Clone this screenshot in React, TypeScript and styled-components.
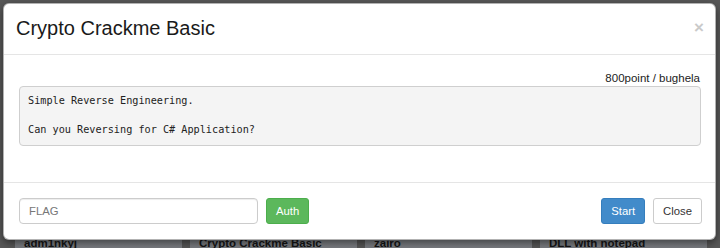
import React from 'react';
import styled, { createGlobalStyle } from 'styled-components';

const GlobalStyle = createGlobalStyle`
  html, body {
    margin: 0;
    padding: 0;
    background: #575757;
  }
  * {
    box-sizing: border-box;
  }
`;

const Page = styled.div`
  position: relative;
  width: 720px;
  height: 248px;
  overflow: hidden;
  background: #585858;
  font-family: 'Liberation Sans', Arial, sans-serif;
`;

const CardGrid = styled.div`
  display: grid;
  grid-template-columns: repeat(4, 167px);
  gap: 8px;
  padding: 200px 0 0 15px;
`;

const Card = styled.div`
  height: 90px;
  padding: 37px 9px 0;
  background: linear-gradient(180deg, #8b8f95 0%, #6d6e71 100%);
  color: #151515;
  font-size: 11.5px;
  line-height: 13px;
  font-weight: bold;
  white-space: nowrap;
`;

const Modal = styled.div`
  position: absolute;
  top: 3px;
  left: 3px;
  width: 713px;
  height: 237px;
  display: flex;
  flex-direction: column;
  background: #fff;
  border: 1px solid rgba(0, 0, 0, 0.3);
  border-radius: 6px;
  box-shadow: 0 3px 9px rgba(0, 0, 0, 0.5);
  color: #222;
`;

const Header = styled.div`
  height: 51px;
  display: flex;
  align-items: center;
  justify-content: space-between;
  padding: 0 11px 0 12px;
  border-bottom: 1px solid #e5e5e5;
`;

const Title = styled.h4`
  margin: 0;
  font-size: 20px;
  font-weight: normal;
  color: #1a1a1a;
  padding-bottom: 1px;
`;

const CloseX = styled.button`
  border: 0;
  background: none;
  padding: 0;
  margin-top: -4px;
  font-family: 'Liberation Sans', Arial, sans-serif;
  font-size: 17px;
  font-weight: bold;
  line-height: 1;
  color: #cacaca;
  cursor: pointer;
`;

const Body = styled.div`
  height: 128px;
  padding: 16px 14px 0 15px;
  border-bottom: 1px solid #e5e5e5;
`;

const Meta = styled.div`
  text-align: right;
  font-size: 11.5px;
  line-height: 14px;
  color: #222;
  padding-right: 1px;
`;

const Pre = styled.pre`
  margin: 1px 0 0;
  padding: 7px 8px;
  background: #f4f4f4;
  border: 1px solid #cfcfcf;
  border-radius: 4px;
  font-family: 'DejaVu Sans Mono', 'Liberation Mono', monospace;
  font-size: 10.2px;
  line-height: 14.5px;
  color: #222;
  white-space: pre-wrap;
`;

const Footer = styled.div`
  flex: 1;
  display: flex;
  align-items: center;
  gap: 8px;
  padding: 0 13px 1px 15px;
`;

const FlagInput = styled.input`
  width: 239px;
  height: 26px;
  padding: 0 9px;
  border: 1px solid #ccc;
  border-radius: 4px;
  box-shadow: inset 0 1px 1px rgba(0, 0, 0, 0.075);
  font-family: 'Liberation Sans', Arial, sans-serif;
  font-size: 11.3px;
  color: #555;
  outline: none;
  &::placeholder {
    color: #777;
  }
`;

const Spacer = styled.div`
  flex: 1;
`;

const Button = styled.button<{ $variant: 'success' | 'primary' | 'default' }>`
  height: 26px;
  padding: 0 9px;
  border-radius: 3px;
  font-family: 'Liberation Sans', Arial, sans-serif;
  font-size: 11.3px;
  cursor: pointer;
  border: 1px solid
    ${(p) => (p.$variant === 'success' ? '#4cae4c' : p.$variant === 'primary' ? '#357ebd' : '#ccc')};
  background: ${(p) => (p.$variant === 'success' ? '#5cb85c' : p.$variant === 'primary' ? '#428bca' : '#fff')};
  color: ${(p) => (p.$variant === 'default' ? '#333' : '#fff')};
`;

const App = () => {
  return (
    <Page>
      <GlobalStyle />
      <CardGrid>
        <Card>adm1nkyj</Card>
        <Card>Crypto Crackme Basic</Card>
        <Card>zairo</Card>
        <Card>DLL with notepad</Card>
      </CardGrid>

      <Modal>
        <Header>
          <Title>Crypto Crackme Basic</Title>
          <CloseX aria-label="Close">×</CloseX>
        </Header>
        <Body>
          <Meta>800point / bughela</Meta>
          <Pre>{'Simple Reverse Engineering.\n\nCan you Reversing for C# Application?'}</Pre>
        </Body>
        <Footer>
          <FlagInput placeholder="FLAG" />
          <Button $variant="success">Auth</Button>
          <Spacer />
          <Button $variant="primary">Start</Button>
          <Button $variant="default">Close</Button>
        </Footer>
      </Modal>
    </Page>
  );
};

export default App;
